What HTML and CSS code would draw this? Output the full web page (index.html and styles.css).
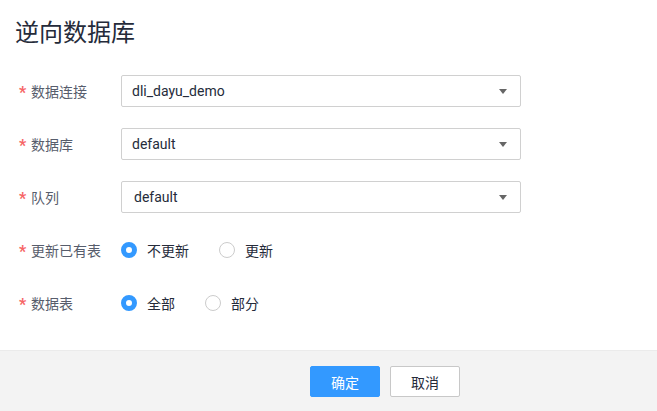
FILE: index.html
```html
<!DOCTYPE html>
<html>
<head>
<meta charset="utf-8">
<link rel="stylesheet" href="styles.css">
</head>
<body>
<div class="dialog">
  <div class="title">逆向数据库</div>
  <div class="form">
    <div class="row">
      <div class="label"><span class="star">*</span>数据连接</div>
      <div class="select"><span class="value">dli_dayu_demo</span><span class="arrow"></span></div>
    </div>
    <div class="row">
      <div class="label"><span class="star">*</span>数据库</div>
      <div class="select"><span class="value">default</span><span class="arrow"></span></div>
    </div>
    <div class="row">
      <div class="label"><span class="star">*</span>队列</div>
      <div class="select"><span class="value v2">default</span><span class="arrow"></span></div>
    </div>
    <div class="row">
      <div class="label"><span class="star">*</span>更新已有表</div>
      <div class="radios">
        <label class="radio"><span class="dot checked"></span>不更新</label>
        <label class="radio"><span class="dot"></span>更新</label>
      </div>
    </div>
    <div class="row">
      <div class="label"><span class="star">*</span>数据表</div>
      <div class="radios">
        <label class="radio"><span class="dot checked"></span>全部</label>
        <label class="radio"><span class="dot"></span>部分</label>
      </div>
    </div>
  </div>
  <div class="footer">
    <button class="btn primary">确定</button>
    <button class="btn">取消</button>
  </div>
</div>
</body>
</html>
```
FILE: styles.css
```css
* { box-sizing: border-box; }
html, body {
  margin: 0;
  padding: 0;
  background: #fff;
  font-family: Roboto, "Noto Sans CJK SC", sans-serif;
}
.dialog {
  width: 657px;
  height: 411px;
  display: flex;
  flex-direction: column;
}
.title {
  padding: 16px 0 0 15px;
  font-size: 24px;
  line-height: 34px;
  height: 50px;
  color: #252b3a;
  margin-bottom: 25px;
}
.form {
  flex: 1;
  display: flex;
  flex-direction: column;
  gap: 21px;
}
.row {
  display: flex;
  align-items: center;
  height: 32px;
}
.label {
  width: 121px;
  padding-left: 19px;
  font-size: 14px;
  color: #575d6c;
  display: flex;
  align-items: center;
  margin-top: -1px;
}
.star {
  color: #f66565;
  font-size: 16px;
  width: 12px;
  line-height: 14px;
  padding-top: 4px;
  font-weight: bold;
}
.select {
  width: 400px;
  height: 32px;
  border: 1px solid #d0d0d0;
  border-radius: 2px;
  display: flex;
  align-items: center;
  justify-content: space-between;
  padding: 0 13px 0 10px;
}
.value {
  font-size: 14px;
  color: #252b3a;
}
.value.v2 { padding-left: 2px; }
.arrow {
  width: 0;
  height: 0;
  border-left: 4px solid transparent;
  border-right: 4px solid transparent;
  border-top: 5px solid #666;
}
.radios {
  display: flex;
  align-items: center;
}
.radio {
  display: flex;
  align-items: center;
  font-size: 14px;
  color: #252b3a;
  margin-right: 30px;
}
.dot {
  width: 16px;
  height: 16px;
  border-radius: 50%;
  border: 1px solid #cccccc;
  margin-right: 10px;
  background: #fff;
}
.dot.checked {
  border: 5px solid #3399ff;
}
.footer {
  height: 61px;
  background: #f3f3f3;
  border-top: 1px solid #ebebeb;
  display: flex;
  justify-content: flex-start;
  align-items: flex-start;
  padding: 15px 0 0 310px;
  gap: 10px;
}
.btn {
  width: 70px;
  height: 31px;
  font-size: 14px;
  font-family: Roboto, "Noto Sans CJK SC", sans-serif;
  border: 1px solid #c8c8c8;
  background: #fff;
  color: #252b3a;
  border-radius: 2px;
  padding: 0;
}
.btn.primary {
  background: #3399ff;
  border-color: #3399ff;
  color: #fff;
}
```
